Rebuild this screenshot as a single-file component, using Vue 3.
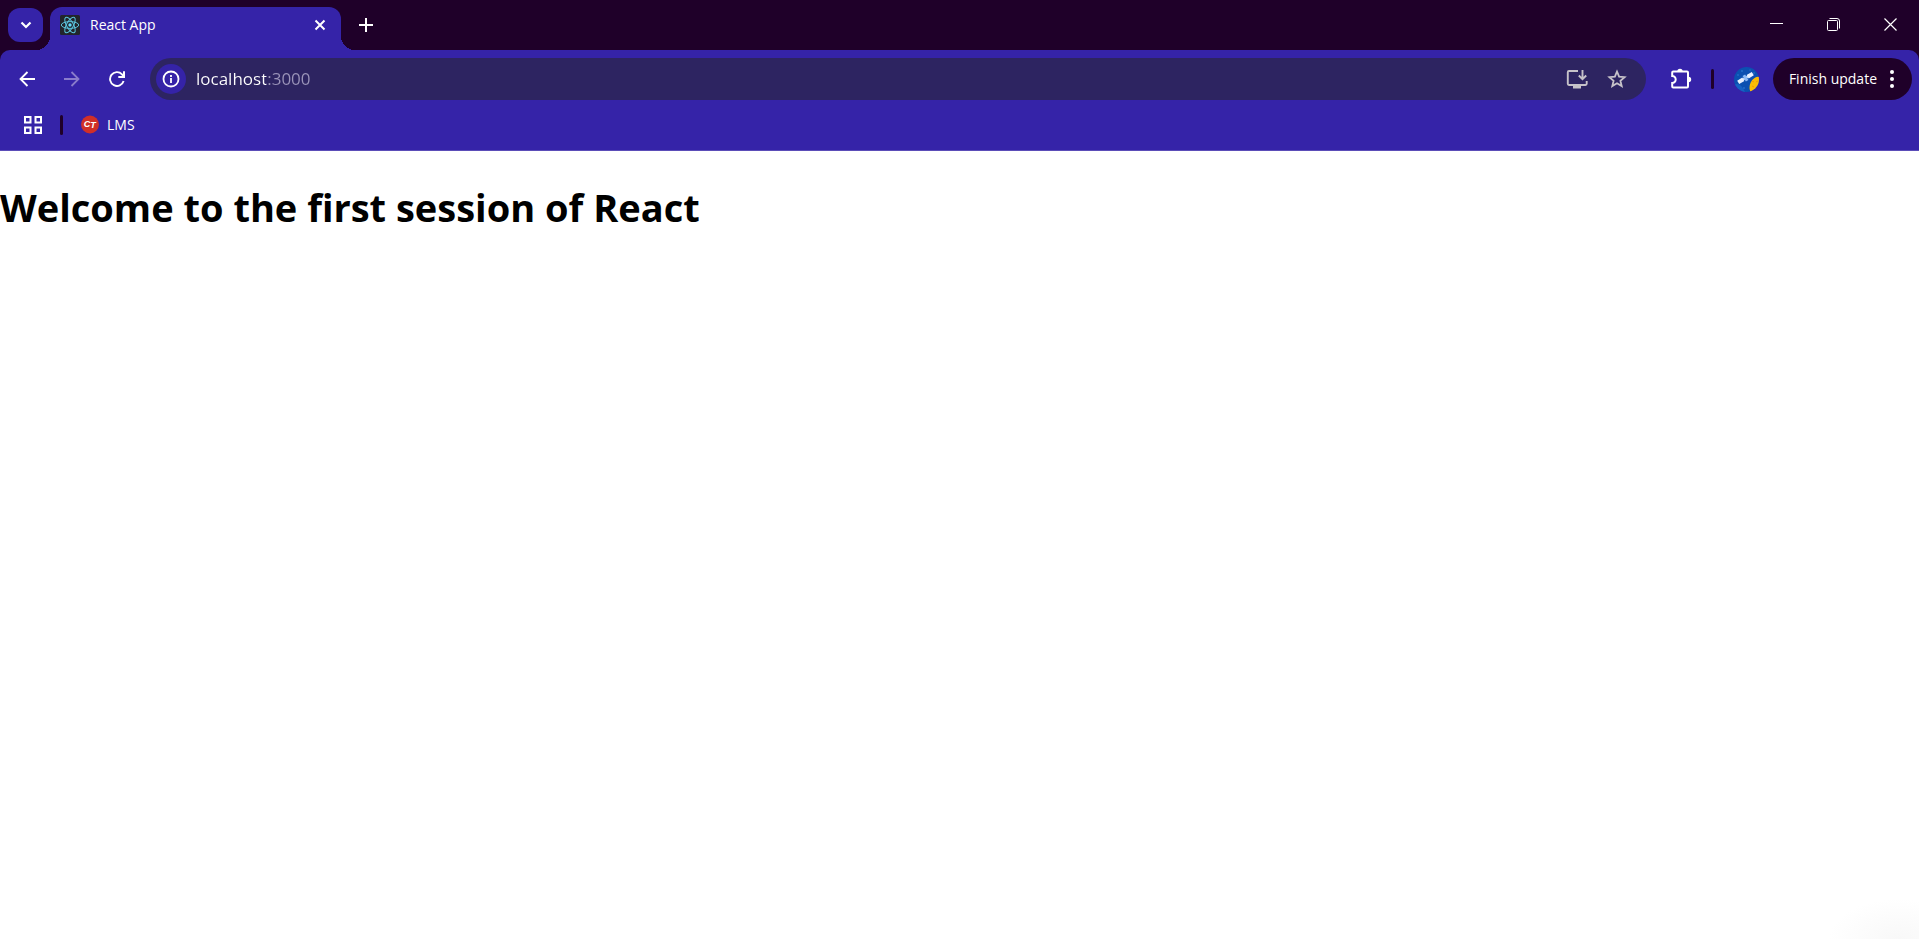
<script setup>
import { ref } from 'vue'

const address = ref('localhost:3000')
const electrons = [0, 60, 120]
</script>

<template>
  <div class="browser">
    <header class="tab-strip">
      <button class="tab-search" aria-label="Search tabs">
        <svg width="12" height="8" viewBox="0 0 12 8"><path d="M1.5 1.5 6 6l4.500-4.500" fill="none" stroke="#fff" stroke-width="2.200" /></svg>
      </button>
      <div class="tab">
        <svg class="favicon" width="20" height="20" viewBox="0 0 20 20">
          <rect width="20" height="20" rx="1.500" fill="#22252b" />
          <g fill="none" stroke="#5bc4dc" stroke-width="1">
            <ellipse v-for="angle in electrons" :key="angle" cx="10" cy="10" rx="8.700" ry="3.400" :transform="`rotate(${angle} 10 10)`" />
          </g>
          <circle cx="10" cy="10" r="1.700" fill="#61dafb" />
        </svg>
        <span class="tab-title">React App</span>
        <button class="tab-close" aria-label="Close tab">
          <svg width="12" height="12" viewBox="0 0 12 12"><path d="m1.500 1.500 9 9m0-9-9 9" stroke="#fff" stroke-width="2" /></svg>
        </button>
      </div>
      <button class="new-tab" aria-label="New tab">
        <svg width="14" height="14" viewBox="0 0 14 14"><path d="M7 0v14M0 7h14" stroke="#fff" stroke-width="2" /></svg>
      </button>
      <div class="window-controls">
        <button aria-label="Minimize"><svg width="13" height="13" viewBox="0 0 13 13"><path d="M0 5.500h13" stroke="#fff" /></svg></button>
        <button aria-label="Restore">
          <svg width="13" height="13" viewBox="0 0 13 13" fill="none" stroke="#fff">
            <rect x=".5" y="2.500" width="10" height="10" rx="1" />
            <path d="M2.500.5H10A2.500 2.500 0 0 1 12.500 3v7.500" />
          </svg>
        </button>
        <button aria-label="Close"><svg width="13" height="13" viewBox="0 0 13 13"><path d="m.5.5 12 12m0-12-12 12" stroke="#fff" stroke-width="1.200" /></svg></button>
      </div>
    </header>

    <div class="chrome">
      <nav class="toolbar" aria-label="Navigation">
        <button class="nav" aria-label="Back">
          <svg width="16" height="16" viewBox="0 0 16 16"><path d="M16 8H1.500M8.500 1l-7 7 7 7" fill="none" stroke="#fff" stroke-width="1.800" /></svg>
        </button>
        <button class="nav" aria-label="Forward" disabled>
          <svg width="16" height="16" viewBox="0 0 16 16"><path d="M0 8h14.500M7.500 1l7 7-7 7" fill="none" stroke="#8a7ccb" stroke-width="1.800" /></svg>
        </button>
        <button class="nav" aria-label="Reload">
          <svg width="16" height="16" viewBox="0 0 16 16">
            <path d="M14.600 10A6.900 6.900 0 1 1 13 3.300L14.800 5.500" fill="none" stroke="#fff" stroke-width="1.900" />
            <path d="M16 .3V7H9.300V5H14V.3z" fill="#fff" />
          </svg>
        </button>
        <div class="omnibox">
          <button class="site-info" aria-label="View site information">
            <svg width="18" height="18" viewBox="0 0 18 18">
              <circle cx="9" cy="9" r="7.500" fill="none" stroke="#fff" stroke-width="1.800" />
              <path d="M9 8v5M9 5v2" stroke="#fff" stroke-width="1.800" />
            </svg>
          </button>
          <input v-model="address" class="address" type="text" aria-label="Address" spellcheck="false" />
          <button class="omni-action" aria-label="Install app">
            <svg width="22" height="20" viewBox="0 0 22 20">
              <path d="M12 2H3a1.200 1.200 0 0 0-1.200 1.200v11.600A1.200 1.200 0 0 0 3 16h16.500a1.200 1.200 0 0 0 1.200-1.200V12" fill="none" stroke="#c6c2c9" stroke-width="1.900" />
              <path d="M7 16h8v3.500H7z" fill="#c6c2c9" />
              <path d="M16.500 1v9M12.800 6.500l3.700 3.700 3.700-3.700" fill="none" stroke="#c6c2c9" stroke-width="1.900" />
            </svg>
          </button>
          <button class="omni-action" aria-label="Bookmark this tab">
            <svg width="20" height="20" viewBox="0 0 20 20"><path d="m10 2.500 2.100 5.100 5.500.5-4.200 3.600 1.300 5.400-4.700-2.900-4.700 2.900 1.300-5.400-4.200-3.600 5.500-.5z" fill="none" stroke="#c6c2c9" stroke-width="1.800" /></svg>
          </button>
        </div>
        <button class="extensions" aria-label="Extensions">
          <svg width="22" height="22" viewBox="0 0 22 22">
            <path d="M3.200 3.500H17q1 0 1 1V18.500q0 1-1 1H3.200q-1 0-1-1V15a3.400 3.400 0 0 0 0-7V4.500q0-1 1-1z" fill="none" stroke="#fff" stroke-width="2" />
            <path d="M7.300 3.500a2.700 2.700 0 0 1 5.400 0zM18.500 8.800a2.700 2.700 0 0 1 0 5.400z" fill="#fff" />
          </svg>
        </button>
        <span class="divider"></span>
        <button class="profile" aria-label="Profile">
          <svg width="25" height="25" viewBox="0 0 25 25">
            <defs><clipPath id="avatar"><circle cx="12.500" cy="12.500" r="12.500" /></clipPath></defs>
            <g clip-path="url(#avatar)">
              <rect width="25" height="25" fill="#0b50b1" />
              <path d="M0 18q6-4 11 7H0z" fill="#1561c4" />
              <g fill="#327fd8"><circle cx="8" cy="4" r=".8" /><circle cx="4" cy="8" r=".7" /><circle cx="16" cy="3" r=".6" /><circle cx="20" cy="6" r=".7" /><circle cx="10" cy="21" r=".8" /></g>
              <ellipse cx="22.500" cy="18.500" rx="6.500" ry="9" transform="rotate(24 22.500 18.500)" fill="#fbbc04" />
              <path d="m18 14 2 1m-2 4 2 1m2-5 2-1m-3 8 2-1" stroke="#f29900" stroke-width="1" />
              <g transform="rotate(-31 11.500 11)">
                <path d="M3 9h6v4H3zM14 9h6v4h-6z" fill="#e8f0fe" />
                <path d="M8.500 11h6" stroke="#d2e3fc" stroke-width="2" />
                <path d="M10 7.800h3v6.400h-3z" fill="#8dbcf9" />
              </g>
            </g>
          </svg>
        </button>
        <button class="update">
          <span>Finish update</span>
          <svg width="4" height="20" viewBox="0 0 4 20" fill="#fff"><circle cx="2" cy="3" r="2" /><circle cx="2" cy="10" r="2" /><circle cx="2" cy="17" r="2" /></svg>
        </button>
      </nav>

      <nav class="bookmarks" aria-label="Bookmarks">
        <button class="apps" aria-label="Apps">
          <svg width="20" height="20" viewBox="0 0 20 20" fill="none" stroke="#fff" stroke-width="2">
            <path d="M2 2h5.500v5.500H2zM12.500 2H18v5.500h-5.500zM2 12.500h5.500V18H2zM12.500 12.500H18V18h-5.500z" />
          </svg>
        </button>
        <span class="divider"></span>
        <a class="bookmark" href="#lms">
          <svg width="20" height="20" viewBox="0 0 20 20" aria-hidden="true">
            <circle cx="10" cy="9.500" r="9" fill="#d12f28" />
            <text x="9.700" y="12" text-anchor="middle" class="logo-text">C<tspan dy="1">T</tspan></text>
          </svg>
          <span>LMS</span>
        </a>
      </nav>
    </div>

    <main class="page">
      <h1>Welcome to the first session of React</h1>
    </main>
  </div>
</template>

<style>
body {
  margin: 0;
}
</style>

<style scoped>
.browser {
  --frame: #1f0029;
  --theme: #3523a8;
  display: flex;
  flex-direction: column;
  min-height: 100vh;
  background: var(--frame);
  color: #fff;
  font: 14px/20px "Open Sans", "Noto Sans", sans-serif;
}

button {
  display: flex;
  align-items: center;
  justify-content: center;
  flex: none;
  margin: 0;
  padding: 0;
  border: 0;
  background: none;
  color: inherit;
  font: inherit;
}

svg {
  display: block;
  flex: none;
}

.tab-strip {
  display: flex;
  height: 50px;
}

.tab-search {
  width: 35px;
  height: 34px;
  margin: 8px 7px 0 8px;
  border-radius: 12px;
  background: var(--theme);
}

.tab {
  position: relative;
  display: flex;
  align-items: center;
  box-sizing: border-box;
  width: 291px;
  margin-top: 7px;
  padding: 0 11px 7px 10px;
  border-radius: 12px 12px 0 0;
  background: var(--theme);
}

.tab::before,
.tab::after {
  content: "";
  position: absolute;
  bottom: 0;
  width: 14px;
  height: 14px;
}

.tab::before {
  right: 100%;
  background: radial-gradient(circle at 0 0, transparent 14px, var(--theme) 14px);
}

.tab::after {
  left: 100%;
  background: radial-gradient(circle at 100% 0, transparent 14px, var(--theme) 14px);
}

.tab-title {
  flex: 1;
  margin-left: 10px;
}

.tab-close {
  width: 20px;
  height: 20px;
}

.new-tab {
  width: 34px;
  height: 34px;
  margin: 8px 0 0 8px;
}

.window-controls {
  display: flex;
  margin-left: auto;
}

.window-controls button {
  width: 57px;
  height: 49px;
}

.chrome {
  border-bottom: 1px solid #5b4db8;
  border-radius: 10px 10px 0 0;
  background: var(--theme);
}

.toolbar {
  display: flex;
  align-items: center;
  padding: 8px 7px 0 9px;
}

.nav {
  width: 35px;
  height: 42px;
  margin-right: 10px;
}

.omnibox {
  display: flex;
  align-items: center;
  flex: 1;
  min-width: 0;
  height: 42px;
  margin-left: 6px;
  padding: 0 14px 0 6px;
  box-sizing: border-box;
  border-radius: 21px;
  background: #2d2461;
}

.site-info {
  width: 30px;
  height: 30px;
  border-radius: 50%;
  background: var(--theme);
}

.address {
  flex: 1;
  min-width: 0;
  height: 30px;
  margin-left: 10px;
  padding: 0;
  border: 0;
  outline: 0;
  background: linear-gradient(to right, #fff 70px, #9b94b9 70px);
  background-clip: text;
  color: transparent;
  font: 17px/30px "Open Sans", "Noto Sans", sans-serif;
}

.omni-action {
  width: 30px;
  height: 30px;
  margin-left: 10px;
}

.extensions {
  width: 34px;
  height: 34px;
  margin-left: 18px;
}

.divider {
  flex: none;
  width: 3px;
  height: 20px;
  border-radius: 2px;
  background: var(--frame);
}

.toolbar .divider {
  margin: 0 20px 0 13px;
}

.update {
  gap: 13px;
  height: 42px;
  margin-left: 14px;
  padding: 0 18px 0 16px;
  border-radius: 21px;
  background: var(--frame);
}

.bookmarks {
  display: flex;
  align-items: center;
  height: 50px;
  padding: 0 23px;
  box-sizing: border-box;
}

.bookmarks .divider {
  margin: 0 17px;
}

.bookmark {
  display: flex;
  align-items: center;
  gap: 7px;
  color: inherit;
  text-decoration: none;
}

.logo-text {
  fill: #fff;
  font: italic bold 9px "Liberation Sans", sans-serif;
}

.page {
  flex: 1;
  background: radial-gradient(ellipse 70px 40px at calc(100% - 20px) 100%, #f8f8f8, #fff) #fff;
  color: #000;
}

h1 {
  margin: 29px 0;
  font: bold 38px/54px "Open Sans", "Noto Sans", sans-serif;
}
</style>
